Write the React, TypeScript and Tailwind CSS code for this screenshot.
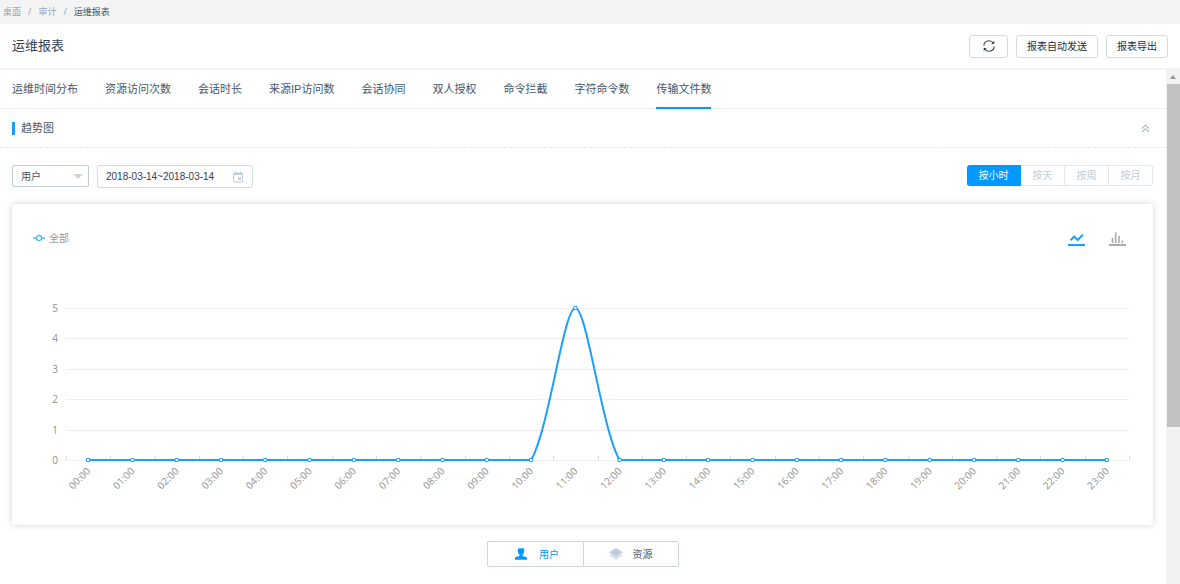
import React, { useState } from 'react';
import { clsx } from 'clsx';

const TABS = [
  '运维时间分布',
  '资源访问次数',
  '会话时长',
  '来源IP访问数',
  '会话协同',
  '双人授权',
  '命令拦截',
  '字符命令数',
  '传输文件数',
];

const PERIODS = ['按小时', '按天', '按周', '按月'];

const HOURLY = [0, 0, 0, 0, 0, 0, 0, 0, 0, 0, 0, 5, 0, 0, 0, 0, 0, 0, 0, 0, 0, 0, 0, 0];

// chart geometry, in viewBox units
const CHART = { width: 1141, height: 261, left: 54, right: 1117, top: 44, bottom: 196, max: 5 };
const SMOOTH = 0.26;

const band = (CHART.right - CHART.left) / HOURLY.length;
const toX = (i: number) => CHART.left + band * (i + 0.5);
const toY = (v: number) => CHART.bottom - (v / CHART.max) * (CHART.bottom - CHART.top);
const clampY = (y: number) => Math.min(CHART.bottom, Math.max(CHART.top, y));

const buildPath = (values: number[]) => {
  const pts = values.map((v, i) => ({ x: toX(i), y: toY(v) }));

  // Handle length is shared between both sides in proportion to the segment lengths
  const handle = (i: number, side: 'in' | 'out') => {
    const p = pts[i];
    const a = pts[Math.max(0, i - 1)];
    const b = pts[Math.min(pts.length - 1, i + 1)];
    const before = Math.hypot(p.x - a.x, p.y - a.y);
    const after = Math.hypot(b.x - p.x, b.y - p.y);
    const k = (SMOOTH * (side === 'in' ? -before : after)) / (before + after);
    return `${p.x + (b.x - a.x) * k} ${clampY(p.y + (b.y - a.y) * k)}`;
  };

  return pts.reduce((d, p, i) => {
    if (i === 0) return `M${p.x} ${p.y}`;
    return `${d} C${handle(i - 1, 'out')} ${handle(i, 'in')} ${p.x} ${p.y}`;
  }, '');
};

const TrendChart: React.FC = () => (
  <svg viewBox={`0 0 ${CHART.width} ${CHART.height}`} className="block w-full" role="img" aria-label="趋势图">
    {[0, 1, 2, 3, 4, 5].map((v) => (
      <g key={v}>
        <line
          x1={CHART.left}
          x2={CHART.right}
          y1={Math.round(toY(v)) + 0.5}
          y2={Math.round(toY(v)) + 0.5}
          stroke="#eeeeee"
        />
        <text x="46" y={toY(v) + 4} textAnchor="end" className="fill-[#999999] text-[10px]">
          {v}
        </text>
      </g>
    ))}
    {Array.from({ length: HOURLY.length + 1 }, (_, i) => {
      const x = Math.round(CHART.left + band * i) + 0.5;
      return <line key={i} x1={x} x2={x} y1={CHART.bottom - 4} y2={CHART.bottom} stroke="#dddddd" />;
    })}
    <path d={buildPath(HOURLY)} fill="none" stroke="#1a9fff" strokeWidth="2" />
    {HOURLY.map((v, i) => (
      <g key={i}>
        <circle cx={toX(i)} cy={toY(v)} r="1.8" fill="#ffffff" stroke="#1a9fff" strokeWidth="1.1" />
        <text
          transform={`translate(${toX(i)} ${CHART.bottom + 9}) rotate(-45)`}
          textAnchor="end"
          dominantBaseline="central"
          className="fill-[#999999] text-[10px]"
        >
          {`${String(i).padStart(2, '0')}:00`}
        </text>
      </g>
    ))}
  </svg>
);

const RefreshIcon = () => (
  <svg viewBox="0 0 14 14" className="h-3.5 w-3.5" fill="none" stroke="#3f4a5a" strokeWidth="1.1">
    <path d="M1.8 6.6A5.1 5.1 0 0 1 11.3 4.3M12.2 7.4A5.1 5.1 0 0 1 2.7 9.7" />
    <path d="M12.3 1.8v3.1H9.2ZM1.7 12.2V9.1h3.1Z" fill="#3f4a5a" stroke="none" />
  </svg>
);

const CalendarIcon = () => (
  <svg viewBox="0 0 12 12" className="h-3 w-3" fill="none" stroke="#bfcbd9">
    <rect x="1.5" y="2" width="9" height="9" rx="0.8" />
    <path d="M1.5 3.2h9" strokeWidth="1.6" />
    <path d="M3.5 0.5V3M8.5 0.5V3" />
    <rect x="6.3" y="6.3" width="2.7" height="2.7" fill="#bfcbd9" stroke="none" />
  </svg>
);

const LineIcon = () => (
  <svg viewBox="0 0 17 16" className="h-4 w-[17px]" fill="none" stroke="currentColor" strokeWidth="2">
    <path d="M2.5 9.3 6.3 5.6 9.6 9 15 3.6" />
    <path d="M0 14h17" />
  </svg>
);

const BarIcon = () => (
  <svg viewBox="0 0 17 16" className="h-4 w-[17px]" fill="none" stroke="currentColor">
    <path d="M3.5 7v5M6.7 1.5V12M10 4.8V12M13.3 9.5V12" strokeWidth="1.6" />
    <path d="M0 14h17" strokeWidth="2" />
  </svg>
);

const UserIcon = () => (
  <svg viewBox="0 0 12 12" className="h-3 w-3" fill="currentColor">
    <path d="M2.8 .6Q6 0 9.2 .6V3.400Q9 5.600 7.400 6.900V7.900L11.300 9.100Q12 9.400 12 10.200V11.800H0V10.200Q0 9.400.700 9.100L4.600 7.900V6.900Q3 5.600 2.800 3.400Z" />
  </svg>
);

const LayersIcon = () => (
  <svg viewBox="0 0 14 12" className="h-3 w-3.5">
    <path d="M0 7.400 7 3.800 14 7.400 7 11.800Z" fill="#dde4ec" />
    <path d="M0 4.300 7 0 14 4.300 7 8.600Z" fill="#bfcbd9" />
  </svg>
);

const headerButton =
  'flex h-[23px] items-center rounded-[3px] border border-[#d3dce6] bg-white px-2.5 text-[10px] text-[#1f2d3d]';

export default function App() {
  const [tab, setTab] = useState('传输文件数');
  const [period, setPeriod] = useState('按小时');
  const [chartType, setChartType] = useState('line');
  const [target, setTarget] = useState('user');

  return (
    <div className="flex min-h-screen flex-col bg-white font-['Noto_Sans','Noto_Sans_CJK_SC',sans-serif] text-[#475669]">
      <nav className="flex h-6 items-center gap-[7px] bg-[#f4f4f4] px-[3px] text-[9px] text-[#97a8be]">
        <a href="#desktop">桌面</a>
        <span>/</span>
        <a href="#audit">审计</a>
        <span>/</span>
        <span className="text-[#48576a]">运维报表</span>
      </nav>

      <header className="flex h-[46px] items-center justify-between border-b-2 border-[#f4f4f4] px-3">
        <h1 className="text-[13px] text-[#324057]">运维报表</h1>
        <div className="flex gap-2">
          <button className={clsx(headerButton, 'w-[39px] justify-center')} aria-label="刷新">
            <RefreshIcon />
          </button>
          <button className={headerButton}>报表自动发送</button>
          <button className={headerButton}>报表导出</button>
        </div>
      </header>

      <div className="flex flex-1">
        <main className="min-w-0 flex-1">
          <div className="flex h-[39px] gap-[27px] border-b border-[#eeeeee] px-3">
            {TABS.map((name) => (
              <button
                key={name}
                onClick={() => setTab(name)}
                className={clsx(
                  '-mb-px shrink-0 border-b-2 pt-0.5 font-["Liberation_Sans","Noto_Sans_CJK_SC",sans-serif] text-[11px]',
                  tab === name ? 'border-[#0099ff]' : 'border-transparent',
                )}
              >
                {name}
              </button>
            ))}
          </div>

          <div className="flex h-[39px] items-center justify-between border-b border-dashed border-[#e8e8e8] pr-4 pl-3">
            <h2 className="flex items-center gap-1.5 text-[11px]">
              <span className="h-[13px] w-[3px] bg-[#1a9fff]" />
              趋势图
            </h2>
            <button aria-label="收起">
              <svg viewBox="0 0 9 9" className="h-[9px] w-[9px]" fill="none" stroke="#a9b8ca" strokeWidth="1.1">
                <path d="M1 4.500 4.500 1.200 8 4.500M1 8 4.500 4.700 8 8" />
              </svg>
            </button>
          </div>

          <div className="pt-[17px] pr-[13px] pb-4 pl-3">
            <div className="flex items-start justify-between">
              <div className="flex items-start gap-2">
                <div className="relative">
                  <select
                    aria-label="统计对象"
                    className="block h-[22px] w-[77px] appearance-none rounded-[2px] border border-[#bfcbd9] bg-white px-2 text-[10px] text-[#475669]"
                  >
                    <option>用户</option>
                    <option>资源</option>
                  </select>
                  <svg viewBox="0 0 10 5" className="pointer-events-none absolute top-[9px] right-1.5 h-[5px] w-2.5">
                    <path d="M0 0H10L5 5Z" fill="#cbd5e0" />
                  </svg>
                </div>
                <label className="flex h-[23px] w-[156px] items-center rounded-[2px] border border-[#d3dce6] px-2">
                  <input
                    type="text"
                    aria-label="日期范围"
                    defaultValue="2018-03-14~2018-03-14"
                    className="min-w-0 flex-1 bg-transparent font-['Liberation_Sans',sans-serif] text-[10px] text-[#324057] outline-none"
                  />
                  <CalendarIcon />
                </label>
              </div>
              <div className="flex">
                {PERIODS.map((name) => (
                  <button
                    key={name}
                    onClick={() => setPeriod(name)}
                    className={clsx(
                      'h-[21px] w-11 border-y border-r text-[10px] first:w-[54px] first:rounded-l-[3px] last:rounded-r-[3px]',
                      period === name
                        ? 'border-[#0099ff] bg-[#0099ff] text-white'
                        : 'border-[#e2e8f0] bg-white text-[#bfcbd9]',
                    )}
                  >
                    {name}
                  </button>
                ))}
              </div>
            </div>

            <section className="mt-4 rounded-[3px] bg-white shadow-[0_0_7px_rgba(0,0,0,0.18)]">
              <div className="flex h-[60px] items-center justify-between pt-2 pr-[27px] pl-[21px]">
                <div className="flex items-center gap-1 text-[10px] text-[#999999]">
                  <svg viewBox="0 0 12 8" className="h-2 w-3" fill="none" stroke="#4db5ff" strokeWidth="1.3">
                    <path d="M0 4h3.500M8.500 4H12" />
                    <circle cx="6" cy="4" r="2.5" />
                  </svg>
                  全部
                </div>
                <div className="flex gap-6 pt-0.5">
                  <button
                    aria-label="折线图"
                    onClick={() => setChartType('line')}
                    className={chartType === 'line' ? 'text-[#1a9fff]' : 'text-[#aaaaaa]'}
                  >
                    <LineIcon />
                  </button>
                  <button
                    aria-label="柱状图"
                    onClick={() => setChartType('bar')}
                    className={chartType === 'bar' ? 'text-[#1a9fff]' : 'text-[#aaaaaa]'}
                  >
                    <BarIcon />
                  </button>
                </div>
              </div>
              <TrendChart />
            </section>

            <div className="mt-4 flex justify-center">
              <button
                onClick={() => setTarget('user')}
                className={clsx(
                  'flex h-[26px] w-24 items-center justify-center gap-3 rounded-l-[2px] border border-r-0 border-[#cbd5e0] pl-1 text-[10px]',
                  target === 'user' && 'text-[#0099ff]',
                )}
              >
                <UserIcon />
                用户
              </button>
              <button
                onClick={() => setTarget('resource')}
                className={clsx(
                  'flex h-[26px] w-24 items-center justify-center gap-2.5 rounded-r-[2px] border border-[#cbd5e0] text-[10px]',
                  target === 'resource' && 'text-[#0099ff]',
                )}
              >
                <LayersIcon />
                资源
              </button>
            </div>
          </div>
        </main>

        <div className="flex w-3.5 flex-col bg-[#f1f1f1]" aria-hidden="true">
          <div className="flex h-3.5 items-center justify-center">
            <svg viewBox="0 0 6 4" className="h-1 w-1.5">
              <path d="M0 4 3 0 6 4Z" fill="#999999" />
            </svg>
          </div>
          <div className="ml-px grow-[343] bg-[#c1c1c1]" />
          <div className="grow-[157]" />
        </div>
      </div>
    </div>
  );
}
